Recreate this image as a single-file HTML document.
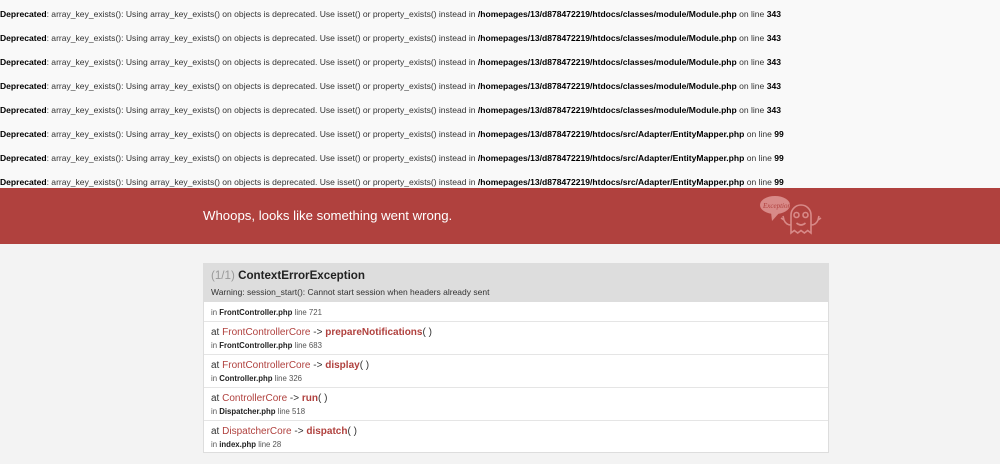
<!DOCTYPE html>
<html><head><meta charset="utf-8"><style>
body{margin:0;background:#f9f9f9;font-family:"Liberation Sans",Arial,sans-serif;width:1000px;height:464px;overflow:hidden;color:#333}
.d{position:absolute;left:0;font-size:8.55px;color:#333;white-space:nowrap;line-height:10px}
.d b{color:#000}
.band{position:absolute;left:0;top:188px;width:1000px;height:56px;background:#b0413e}
.band h1{position:absolute;left:203px;top:20px;margin:0;font-size:13.2px;font-weight:normal;color:#fff;line-height:16px}
.box{position:absolute;left:203px;top:263px;width:624px;border:1px solid #ddd;background:#fff}
.hd{background:#ddd;height:38px;padding:0 0 0 7px}
.hd .t{position:absolute;top:5px;left:7px;font-size:11.6px;font-weight:bold;color:#222}
.hd .t span{color:#999;font-weight:normal}
.hd .w{position:absolute;top:23px;left:7px;font-size:8.5px;color:#333}
.r{border-top:1px solid #e5e5e5;position:relative;padding-left:7px;font-size:7.8px;color:#555}
.r b{color:#222}
.r .a{font-size:10px;color:#333;position:absolute;top:5px;left:7px}
.r .a span{color:#b0413e}
.r .a i{font-style:normal;color:#b0413e;font-weight:bold}
.r .f{position:absolute;left:7px}
</style></head><body>
<div class="d" style="top:9px"><b>Deprecated</b>: array_key_exists(): Using array_key_exists() on objects is deprecated. Use isset() or property_exists() instead in <b>/homepages/13/d878472219/htdocs/classes/module/Module.php</b> on line <b>343</b></div>
<div class="d" style="top:33px"><b>Deprecated</b>: array_key_exists(): Using array_key_exists() on objects is deprecated. Use isset() or property_exists() instead in <b>/homepages/13/d878472219/htdocs/classes/module/Module.php</b> on line <b>343</b></div>
<div class="d" style="top:57px"><b>Deprecated</b>: array_key_exists(): Using array_key_exists() on objects is deprecated. Use isset() or property_exists() instead in <b>/homepages/13/d878472219/htdocs/classes/module/Module.php</b> on line <b>343</b></div>
<div class="d" style="top:81px"><b>Deprecated</b>: array_key_exists(): Using array_key_exists() on objects is deprecated. Use isset() or property_exists() instead in <b>/homepages/13/d878472219/htdocs/classes/module/Module.php</b> on line <b>343</b></div>
<div class="d" style="top:105px"><b>Deprecated</b>: array_key_exists(): Using array_key_exists() on objects is deprecated. Use isset() or property_exists() instead in <b>/homepages/13/d878472219/htdocs/classes/module/Module.php</b> on line <b>343</b></div>
<div class="d" style="top:129px"><b>Deprecated</b>: array_key_exists(): Using array_key_exists() on objects is deprecated. Use isset() or property_exists() instead in <b>/homepages/13/d878472219/htdocs/src/Adapter/EntityMapper.php</b> on line <b>99</b></div>
<div class="d" style="top:153px"><b>Deprecated</b>: array_key_exists(): Using array_key_exists() on objects is deprecated. Use isset() or property_exists() instead in <b>/homepages/13/d878472219/htdocs/src/Adapter/EntityMapper.php</b> on line <b>99</b></div>
<div class="d" style="top:177px"><b>Deprecated</b>: array_key_exists(): Using array_key_exists() on objects is deprecated. Use isset() or property_exists() instead in <b>/homepages/13/d878472219/htdocs/src/Adapter/EntityMapper.php</b> on line <b>99</b></div>
<div class="band"><h1>Whoops, looks like something went wrong.</h1>
<svg style="position:absolute;left:758px;top:5px" width="74" height="46" viewBox="0 0 74 46" fill="none" stroke="#d88a88" stroke-width="1.6">
<ellipse cx="17" cy="12" rx="15" ry="9" fill="#d88a88" stroke="none"/>
<path d="M13 19 L14 28 L22 19" fill="#d88a88" stroke="none"/>
<text x="5" y="15" font-size="7" font-style="italic" fill="#b0413e" stroke="none" font-family="Liberation Serif,serif">Exception!</text>
<path d="M33 40 V22 a10 10 0 0 1 20 0 V40 l-3.3-2.5 -3.3 2.5 -3.4-2.5 -3.3 2.5 -3.4-2.5z"/>
<circle cx="38.5" cy="22" r="2.5"/><circle cx="47.5" cy="22" r="2.5"/>
<path d="M38.5 30 q4.5 4 9 0"/>
<path d="M33 32 q-5 0 -7-5 M26 27 l-1-4 M26 27 l-3-2 M53 32 q5 0 7-5 M60 27 l1-4 M60 27 l3-2"/>
</svg></div>
<div class="box">
<div class="hd"><div class="t"><span>(1/1)</span> ContextErrorException</div><div class="w">Warning: session_start(): Cannot start session when headers already sent</div></div>
<div class="r" style="height:19px;border-top:none"><div class="f" style="top:6px">in <b>FrontController.php</b> line 721</div></div>
<div class="r" style="height:32px"><div class="a">at <span>FrontControllerCore</span> -&gt; <i>prepareNotifications</i>( )</div><div class="f" style="top:19px">in <b>FrontController.php</b> line 683</div></div>
<div class="r" style="height:32px"><div class="a">at <span>FrontControllerCore</span> -&gt; <i>display</i>( )</div><div class="f" style="top:19px">in <b>Controller.php</b> line 326</div></div>
<div class="r" style="height:32px"><div class="a">at <span>ControllerCore</span> -&gt; <i>run</i>( )</div><div class="f" style="top:19px">in <b>Dispatcher.php</b> line 518</div></div>
<div class="r" style="height:31px"><div class="a">at <span>DispatcherCore</span> -&gt; <i>dispatch</i>( )</div><div class="f" style="top:19px">in <b>index.php</b> line 28</div></div>
</div>
<style>body::after{content:"";position:absolute;left:0;top:244px;width:1000px;height:220px;background:#f3f3f3;z-index:-1}</style>
</body></html>
